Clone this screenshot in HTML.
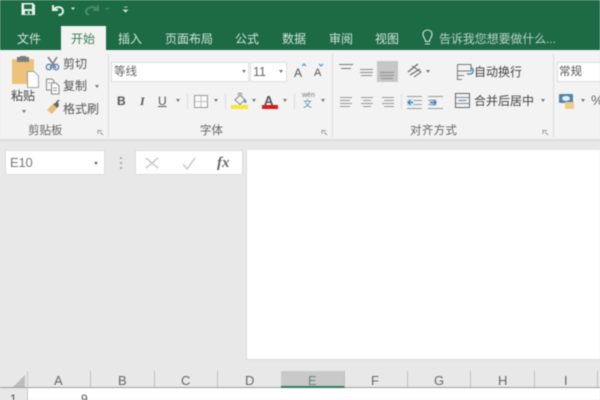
<!DOCTYPE html>
<html style="overflow:hidden;height:400px"><head><meta charset="utf-8"><style>
html,body{margin:0;padding:0}
body{width:600px;height:400px;overflow:hidden;position:relative;background:#e8e8e8;font-family:"Liberation Sans","Noto Sans CJK SC",sans-serif}
#w{left:0;top:0;width:600px;height:400px;overflow:hidden;background:#e8e8e8;filter:blur(.4px)}
#w div,#w span.t{position:absolute}
#w{position:absolute}
.t{white-space:nowrap;line-height:16px;color:#555}
.tab{color:#d3e6da;font-size:12px;top:31px}
.lb{color:#666;font-size:11.5px;top:123px}
.ar{width:0;height:0;border-left:2.5px solid transparent;border-right:2.5px solid transparent;border-top:3px solid #777}
svg{position:absolute;left:0;top:0;z-index:2}
</style></head><body><div id="w">
<div style="left:0;top:0;width:600px;height:50px;background:#1d6b45"></div>
<div style="left:61px;top:26px;width:45px;height:25px;background:#f3f3f3"></div>
<div style="left:0;top:50px;width:600px;height:89px;background:#f3f3f3"></div>
<div style="left:0;top:139px;width:600px;height:2px;background:#dcdcdc"></div>

<span class="t tab" style="left:17px">文件</span>
<span class="t tab" style="left:71px;color:#3f7d5c">开始</span>
<span class="t tab" style="left:118px">插入</span>
<span class="t tab" style="left:165px">页面布局</span>
<span class="t tab" style="left:235px">公式</span>
<span class="t tab" style="left:282px">数据</span>
<span class="t tab" style="left:329px">审阅</span>
<span class="t tab" style="left:375px">视图</span>
<span class="t tab" style="left:439px;font-size:12px;color:#b9d3c4;letter-spacing:-.1px">告诉我您想要做什么...</span>

<div style="left:111px;top:62px;width:138px;height:20px;background:#fff;border:1px solid #dedede;box-sizing:border-box"></div>
<div style="left:250px;top:62px;width:37px;height:20px;background:#fff;border:1px solid #dedede;box-sizing:border-box"></div>
<div style="left:377px;top:61px;width:21px;height:21px;background:#c6c6c6"></div>
<div style="left:557px;top:62px;width:43px;height:20px;background:#fff;border:1px solid #dedede;border-right:0;box-sizing:border-box"></div>
<div style="left:108px;top:54px;width:1px;height:83px;background:#dcdcdc"></div>
<div style="left:332px;top:54px;width:1px;height:83px;background:#dcdcdc"></div>
<div style="left:553px;top:54px;width:1px;height:83px;background:#dcdcdc"></div>

<span class="t" style="left:11px;top:88px;font-size:12px;color:#444">粘贴</span>
<span class="t" style="left:63px;top:56px;font-size:12px">剪切</span>
<span class="t" style="left:63px;top:78px;font-size:12px">复制</span>
<span class="t" style="left:63px;top:101px;font-size:12px">格式刷</span>
<span class="t lb" style="left:28px">剪贴板</span>
<span class="t lb" style="left:200px">字体</span>
<span class="t lb" style="left:410px;letter-spacing:.3px">对齐方式</span>
<span class="t" style="left:114px;top:64px;font-size:11.5px;color:#666">等线</span>
<span class="t" style="left:253px;top:64px;font-size:12.5px;color:#666">11</span>
<span class="t" style="left:117px;top:93px;font-size:12px;font-weight:bold;color:#555">B</span>
<span class="t" style="left:140px;top:93px;font-size:12px;font-weight:bold;font-style:italic;color:#555;font-family:'Liberation Serif',serif">I</span>
<span class="t" style="left:158px;top:93px;font-size:12px;color:#555;text-decoration:underline">U</span>
<span class="t" style="left:294px;top:65px;font-size:12px;color:#555">A</span>
<span class="t" style="left:314px;top:65px;font-size:11px;color:#555">A</span>
<span class="t" style="left:264px;top:93px;font-size:13px;font-weight:bold;color:#555">A</span>
<span class="t" style="left:302px;top:92px;font-size:7px;color:#777;line-height:8px">wén</span>
<span class="t" style="left:303px;top:99px;font-size:9px;color:#3e85b8;line-height:10px">文</span>
<span class="t" style="left:474px;top:64px;font-size:12px;color:#444">自动换行</span>
<span class="t" style="left:474px;top:93px;font-size:12px;color:#444">合并后居中</span>
<span class="t" style="left:559px;top:64px;font-size:11.5px;color:#555">常规</span>
<span class="t" style="left:591px;top:92px;font-size:14px;color:#666">%</span>

<div class="ar" style="left:242px;top:70px"></div><div class="ar" style="left:279px;top:70px"></div>
<div class="ar" style="left:22px;top:110px"></div><div class="ar" style="left:95px;top:85px"></div>
<div class="ar" style="left:176px;top:99px"></div><div class="ar" style="left:214px;top:99px"></div>
<div class="ar" style="left:252px;top:99px"></div><div class="ar" style="left:283px;top:99px"></div>
<div class="ar" style="left:321px;top:99px"></div><div class="ar" style="left:426px;top:70px"></div>
<div class="ar" style="left:541px;top:99px"></div><div class="ar" style="left:581px;top:99px"></div>

<div style="left:5px;top:150px;width:100px;height:25px;background:#fff;border:1px solid #dcdcdc;box-sizing:border-box"></div>
<span class="t" style="left:10px;top:155px;font-size:13px;color:#777;letter-spacing:-.2px">E10</span>
<div class="ar" style="left:94px;top:162px;border-top-color:#666"></div>
<div style="left:120px;top:157px;width:2px;height:2px;background:#aaa;box-shadow:0 5px 0 #aaa,0 10px 0 #aaa"></div>
<div style="left:135px;top:150px;width:108px;height:25px;background:#fff;border:1px solid #dcdcdc;box-sizing:border-box"></div>
<span class="t" style="left:217px;top:155px;font-size:15px;font-style:italic;font-weight:bold;color:#666;font-family:'Liberation Serif',serif">fx</span>

<div style="left:246px;top:150px;width:354px;height:210px;background:#fff;border-left:1px solid #ddd;border-bottom:1px solid #ddd;box-sizing:border-box"></div>

<div style="left:0;top:387px;width:600px;height:13px;background:#fff"></div>
<div style="left:0;top:387px;width:27px;height:13px;background:#e8e8e8"></div>
<div style="left:281px;top:371px;width:63px;height:16px;background:#c9c9c9"></div>
<div style="left:0;top:387px;width:600px;height:1px;background:#9d9d9d"></div>
<div style="left:281px;top:386px;width:64px;height:2px;background:#2f7a55"></div>
<div style="left:27px;top:371px;width:1px;height:29px;background:#c8c8c8"></div>
<div style="left:90px;top:371px;width:1px;height:16px;background:#c0c0c0"></div>
<div style="left:154px;top:371px;width:1px;height:16px;background:#c0c0c0"></div>
<div style="left:217px;top:371px;width:1px;height:16px;background:#c0c0c0"></div>
<div style="left:344px;top:371px;width:1px;height:16px;background:#c0c0c0"></div>
<div style="left:407px;top:371px;width:1px;height:16px;background:#c0c0c0"></div>
<div style="left:470px;top:371px;width:1px;height:16px;background:#c0c0c0"></div>
<div style="left:534px;top:371px;width:1px;height:16px;background:#c0c0c0"></div>
<div style="left:597px;top:371px;width:1px;height:16px;background:#c0c0c0"></div>
<span class="t" style="left:54px;top:373px;font-size:13px;color:#666">A</span>
<span class="t" style="left:118px;top:373px;font-size:13px;color:#666">B</span>
<span class="t" style="left:181px;top:373px;font-size:13px;color:#666">C</span>
<span class="t" style="left:245px;top:373px;font-size:13px;color:#666">D</span>
<span class="t" style="left:308px;top:373px;font-size:13px;color:#6d8a7a">E</span>
<span class="t" style="left:371px;top:373px;font-size:13px;color:#666">F</span>
<span class="t" style="left:434px;top:373px;font-size:13px;color:#666">G</span>
<span class="t" style="left:498px;top:373px;font-size:13px;color:#666">H</span>
<span class="t" style="left:564px;top:373px;font-size:13px;color:#666">I</span>
<span class="t" style="left:10px;top:391px;font-size:12px;color:#555">1</span>
<span class="t" style="left:81px;top:391px;font-size:12px;color:#555">9</span>

<svg width="600" height="400" viewBox="0 0 600 400" fill="none">
<path d="M21.500 3H33L35 5V15H21.500Z" fill="#e9f2ec"/><rect x="24" y="4.500" width="8" height="4.500" fill="#1d6b45"/><rect x="25" y="11" width="7" height="3.200" fill="#1d6b45"/><rect x="28" y="11.500" width="1.500" height="2.500" fill="#e9f2ec"/>
<path d="M53 5V10H58M53.500 10C56 5.500 63 6.500 63 11C63 13.500 61 15 58.500 15" stroke="#e6f0ea" stroke-width="2"/>
<path d="M71 7.500H75L73 10Z" fill="#d6e6dc"/>
<path d="M98 5V10H93M97.500 10C95 5.500 88 6.500 86 11C86 13 87 14.500 89 15" stroke="#4c8a69" stroke-width="2"/>
<path d="M105 8H110L107.500 10Z" fill="#4c8a69"/>
<path d="M124 7H127.500M123.500 10H127.500L125.500 12Z" stroke="#cfe0d6" fill="#cfe0d6" stroke-width=".8"/>
<path d="M425 44H430M425.500 41.500C425.500 38.500 423 37.500 423 34.500C423 31.500 425 30 427.500 30C430 30 432 31.500 432 34.500C432 37.500 429.500 38.500 429.500 41.500Z" stroke="#d6e6dc" stroke-width="1.100"/>
<rect x="12" y="59" width="22" height="25" fill="#edc27a"/>
<rect x="17" y="57" width="12" height="5" fill="#7d7d7d"/><rect x="20" y="56" width="6" height="3" fill="#7d7d7d"/>
<path d="M27.500 71.500H34L38.500 76V87.500H27.500Z" fill="#fff" stroke="#8a8a8a" stroke-width=".8"/>
<path d="M48 57L56 68M57 57L50 68" stroke="#7b7b7b" stroke-width="1.500"/><circle cx="49" cy="67" r="2.700" stroke="#4d84b0" stroke-width="1.300"/><circle cx="56" cy="67" r="2.700" stroke="#4d84b0" stroke-width="1.300"/>
<path d="M46.500 79H52L54 81V90H46.500Z" fill="#f6f6f6" stroke="#888"/><path d="M51.500 83H56L59 86V94H51.500Z" fill="#fff" stroke="#888"/><path d="M53 88H57M53 90.500H57M48 83H50" stroke="#999"/>
<path d="M47 110L53 104L57 108L52 114Z" fill="#e9bd72"/><path d="M53 104L58 102L59 106L57 108Z" fill="#666"/><path d="M56 103L59 100" stroke="#666" stroke-width="1.500"/>
<path d="M98 130.500H102M98 130V134M100 132L103 135" stroke="#999"/>
<path d="M322 130.500H326M322 130V134M324 132L327 135" stroke="#999"/>
<path d="M543 130.500H547M543 130V134M545 132L548 135" stroke="#999"/>
<path d="M187.500 94V109M225.500 94V109M294.500 94V109M401.500 94V109" stroke="#dcdcdc"/>
<rect x="194.500" y="95.500" width="13" height="12" stroke="#9a9a9a" fill="#fafafa"/><path d="M201 96V107M195 101.500H207" stroke="#c4c4c4"/>
<path d="M235 100L240 95L245 100L240 104.500Z" fill="#f2f2f2" stroke="#888"/><path d="M238 95A2 2 0 0 1 242 95" stroke="#888"/><path d="M245 99Q247 101 246 103Q243 103 245 99Z" fill="#3f87bb"/>
<rect x="231" y="105" width="17" height="4" fill="#f4e832"/>
<rect x="262" y="105" width="16" height="4" fill="#d31f1f"/>
<path d="M302 66L304 64L306 66" stroke="#3f87bb"/><path d="M319 64L321 66L323 64" stroke="#3f87bb"/>
<path d="M339 64.500H353M341 68.500H351" stroke="#777"/><path d="M360 69.500H373M360 72.500H373M361 75.500H372" stroke="#888"/><path d="M380 72.500H394M380 75.500H394M381 78.500H393" stroke="#8f8f8f"/>
<path d="M408 72L418 64M410 75L420 69" stroke="#666" stroke-width="1.200"/><path d="M412 66L421 72L414 77" stroke="#666"/>
<path d="M340 97.500H352M340 100.500H350M340 103.500H352M340 106.500H350" stroke="#999"/>
<path d="M361 97.500H373M363 100.500H371M361 103.500H373M363 106.500H371" stroke="#999"/>
<path d="M382 97.500H394M384 100.500H394M382 103.500H394M384 106.500H394" stroke="#999"/>
<rect x="407" y="99" width="7" height="7" fill="#cfe2f0"/><rect x="430" y="99" width="7" height="7" fill="#cfe2f0"/>
<path d="M407 96.500H422M414 100.500H422M414 104.500H422M407 108.500H422" stroke="#999"/><path d="M413 102.500H408M410.500 100L408 102.500L410.500 105" stroke="#2f7db8" stroke-width="1.200"/>
<path d="M428 96.500H443M428 100.500H436M428 104.500H436M428 108.500H443" stroke="#999"/><path d="M430 102.500H436M433.500 100L436 102.500L433.500 105" stroke="#2f7db8" stroke-width="1.200"/>
<path d="M457 64.500H471V71H461" stroke="#777" stroke-width="1.100"/><path d="M457.500 65V79M457 79.500H462M457 71H461M457 75.500H464" stroke="#777"/><path d="M471 68C474 68 474 74 470 74H467" stroke="#2f7db8" stroke-width="1.300"/>
<rect x="455.500" y="93.500" width="14" height="14" stroke="#666"/><path d="M456 97.500H469M456 103.500H469" stroke="#888"/><path d="M458.500 100.500H466.500" stroke="#3f87bb"/>
<rect x="559" y="94" width="14" height="9" rx="1" fill="#4d84b0"/><ellipse cx="566" cy="98.500" rx="4" ry="2.500" fill="#e8eef2"/><rect x="565" y="102" width="9" height="7" fill="#eccd85"/>
<path d="M146 158L158 168M158 158L146 168" stroke="#c2c2c2" stroke-width="1.300"/>
<path d="M183 164L187 169L195 158" stroke="#c2c2c2" stroke-width="1.300"/>
<path d="M25 375V387H13Z" fill="#bcbcbc"/>
</svg>
</div></body></html>
